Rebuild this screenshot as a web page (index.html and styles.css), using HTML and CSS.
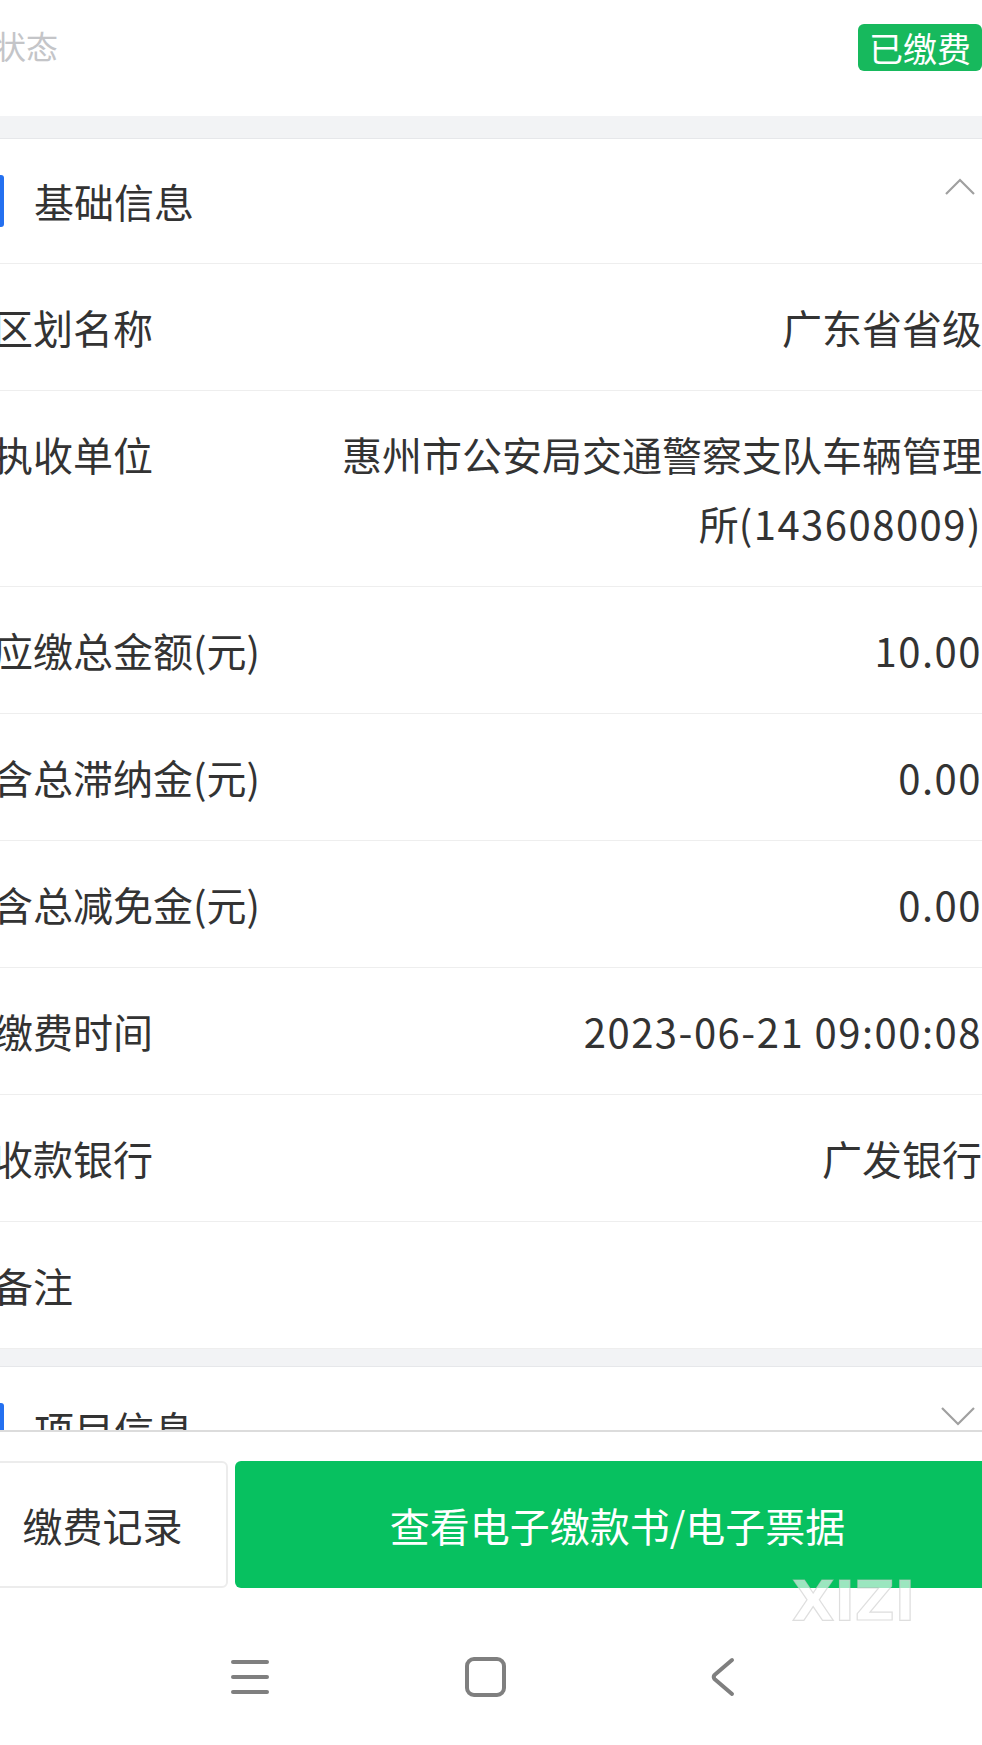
FILE: index.html
```html
<!DOCTYPE html>
<html lang="zh-CN">
	<head>
		<meta http-equiv="Content-Type" content="text/html; charset=utf-8" />
		<title>缴费详情</title>
		<link rel="stylesheet" href="styles.css">
	</head>

	<body>
		<div id="page">
			<!-- scrolling part, cut off by the footer -->
			<div id="scroll">
				<div class="status-row">
					<span class="status-label">状态</span>
					<span class="badge">已缴费</span>
				</div>

				<div class="band"></div>

				<section class="panel">
					<div class="panel-head">
						<span class="mark"></span>
						<span class="panel-title">基础信息</span>
						<svg class="arrow" width="32" height="18" viewBox="0 0 32 18"><polyline points="2,16 16,2 30,16" /></svg>
					</div>
					<div class="row"><span class="label">区划名称</span><span class="value">广东省省级</span></div>
					<div class="row"><span class="label">执收单位</span><span class="value">惠州市公安局交通警察支队车辆管理所<span class="num">(143608009)</span></span></div>
					<div class="row"><span class="label">应缴总金额(元)</span><span class="value num">10.00</span></div>
					<div class="row"><span class="label">含总滞纳金(元)</span><span class="value num">0.00</span></div>
					<div class="row"><span class="label">含总减免金(元)</span><span class="value num">0.00</span></div>
					<div class="row"><span class="label">缴费时间</span><span class="value num">2023-06-21 09:00:08</span></div>
					<div class="row"><span class="label">收款银行</span><span class="value">广发银行</span></div>
					<div class="row"><span class="label">备注</span><span class="value"></span></div>
				</section>

				<div class="band band-sm"></div>

				<section class="panel">
					<div class="panel-head">
						<span class="mark"></span>
						<span class="panel-title">项目信息</span>
						<svg class="arrow" width="36" height="20" viewBox="0 0 36 20"><polyline points="2,2 18,18 34,2" /></svg>
					</div>
				</section>
			</div>

			<div id="footer">
				<div class="actions">
					<button class="btn btn-plain">缴费记录</button>
					<button class="btn btn-primary">查看电子缴款书/电子票据</button>
				</div>
			</div>

			<!-- system navigation -->
			<nav id="sysbar">
				<svg width="40" height="40" viewBox="0 0 40 40"><line x1="3" y1="5" x2="37" y2="5" /><line x1="3" y1="20" x2="37" y2="20" /><line x1="3" y1="35" x2="37" y2="35" /></svg>
				<svg width="42" height="40" viewBox="0 0 42 40"><rect x="2" y="2" width="37" height="36" rx="7" /></svg>
				<svg width="26" height="40" viewBox="0 0 26 40"><path d="M23 3 L5.5 18 Q4 20 5.5 22 L23 37" /></svg>
			</nav>

			<div class="watermark">XIZI</div>
		</div>
	</body>
</html>
```

FILE: styles.css
```css
body {
	margin: 0;
	background: #fff;
	color: #333;
	font-family: "Noto Sans CJK SC", "Noto Sans", sans-serif;
}
#page {
	height: 1745px;
	overflow: hidden;
	position: relative;
	width: 982px;
}
#scroll {
	height: 1430px;
	overflow: hidden;
}

/* status */
.status-row {
	align-items: center;
	display: flex;
	height: 93px;
	justify-content: space-between;
	padding-bottom: 23px;
}
.status-label {
	color: #c4c5c8;
	font-size: 32px;
	margin: -4px 0 0 -6px;
}
.badge {
	background: #17b95d;
	border-radius: 6px;
	color: #fff;
	font-size: 34px;
	height: 47px;
	line-height: 47px;
	margin-top: 1px;
	padding: 0 11px;
}

.band {
	background: #f2f3f5;
	border-bottom: 1px solid #e6e7ea;
	height: 22px;
}
.band-sm {
	height: 17px;
}

/* panels */
.panel-head {
	align-items: center;
	border-bottom: 1px solid #eeeeee;
	display: flex;
	height: 124px;
}
.mark {
	background: #2470f0;
	border-radius: 0 3px 3px 0;
	height: 52px;
	width: 4px;
}
.panel-title {
	flex: 1;
	font-size: 40px;
	margin-left: 30px;
}
.arrow {
	align-self: flex-start;
	fill: none;
	margin-right: 6px;
	margin-top: 39px;
	stroke: #a0a0a0;
	stroke-width: 2.2;
}
.row {
	border-bottom: 1px solid #eeeeee;
	display: flex;
	font-size: 40px;
	line-height: 69px;
	padding: 29px 0 28px;
}
.label {
	flex: none;
	margin-left: -7px;
}
.value {
	margin-left: auto;
	max-width: 660px;
	text-align: right;
}
.num {
	letter-spacing: 1.5px;
}

/* footer buttons */
#footer {
	border-top: 2px solid #dcdcdc;
	padding-top: 29px;
}
.actions {
	display: flex;
	gap: 7px;
	margin: 0 -18px 0 -23px;
}
.btn {
	border-radius: 6px;
	font-family: inherit;
	font-size: 40px;
	height: 127px;
	padding: 0;
}
.btn-plain {
	background: #fff;
	border: 2px solid #ececec;
	color: #333;
	width: 251px;
}
.btn-primary {
	background: #07c160;
	border: 0;
	color: #fff;
	flex: 1;
}

/* android bar */
#sysbar {
	display: grid;
	grid-template-columns: repeat(3, 236px);
	justify-content: center;
	justify-items: center;
	padding: 69px 10px 0 0;
}
#sysbar svg {
	fill: none;
	stroke: #7f7f7f;
	stroke-linecap: round;
	stroke-linejoin: round;
	stroke-width: 4;
}

.watermark {
	color: rgba(255, 255, 255, 0.6);
	font-family: "DejaVu Sans", sans-serif;
	font-size: 55px;
	font-weight: bold;
	left: 792px;
	line-height: 55px;
	position: absolute;
	top: 1574px;
	-webkit-text-stroke: 1.2px rgba(200, 200, 200, 0.6);
}
```
